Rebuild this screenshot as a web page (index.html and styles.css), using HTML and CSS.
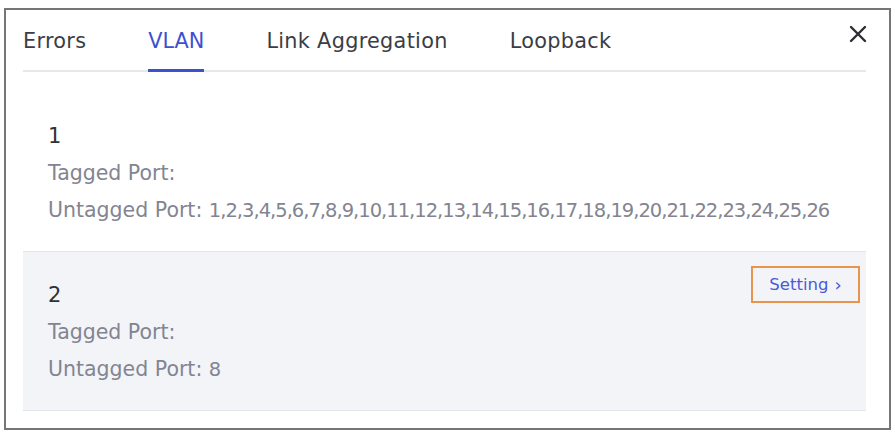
FILE: index.html
```html
<!DOCTYPE html>
<html lang="en">
<head>
<meta charset="utf-8">
<title>VLAN</title>
<link rel="stylesheet" href="styles.css">
</head>
<body>
<div class="frame">
  <div class="header">
    <nav class="tabs">
      <span class="tab">Errors</span>
      <span class="tab active">VLAN</span>
      <span class="tab">Link Aggregation</span>
      <span class="tab">Loopback</span>
    </nav>
    <button class="close" aria-label="Close">
      <svg width="18" height="18" viewBox="0 0 18 18"><path d="M2 2 L16 16 M16 2 L2 16" stroke="#2b2d33" stroke-width="2.4" stroke-linecap="round" fill="none"/></svg>
    </button>
  </div>
  <div class="list">
    <div class="vlan">
      <div class="info">
        <div class="vid">1</div>
        <div class="label">Tagged Port:</div>
        <div class="label">Untagged Port: <span class="ports">1,2,3,4,5,6,7,8,9,10,11,12,13,14,15,16,17,18,19,20,21,22,23,24,25,26</span></div>
      </div>
    </div>
    <div class="vlan hover">
      <div class="info">
        <div class="vid">2</div>
        <div class="label">Tagged Port:</div>
        <div class="label">Untagged Port: <span class="ports">8</span></div>
      </div>
      <a class="setting">Setting <span class="chev">&#8250;</span></a>
    </div>
  </div>
</div>
</body>
</html>
```
FILE: styles.css
```css
html, body {
  margin: 0;
  padding: 0;
  background: #ffffff;
}
body {
  font-family: "DejaVu Sans", "Noto Sans", sans-serif;
}
.frame {
  margin: 8px 4px 0 4px;
  height: 418px;
  border: 2px solid #767676;
  background: #fff;
  padding: 0 23px 0 17px;
  position: relative;
}
.header {
  display: flex;
  align-items: flex-start;
}
.tabs {
  flex: 1;
  display: flex;
  gap: 62px;
  border-bottom: 2px solid #e7e8ec;
  padding-top: 19px;
}
.tab {
  font-size: 20.8px;
  line-height: 24px;
  letter-spacing: 0.3px;
  color: #3a3d45;
  padding-bottom: 16px;
  margin-bottom: -2px;
  border-bottom: 3px solid transparent;
}
.tab.active {
  letter-spacing: 0;
  color: #3d50cf;
  border-bottom-color: #3d50cf;
}
.close {
  position: absolute;
  right: 22px;
  top: 15px;
  border: 0;
  background: transparent;
  padding: 0;
  width: 18px;
  height: 18px;
}
.list {
  display: flex;
  flex-direction: column;
}
.vlan {
  display: flex;
  justify-content: space-between;
  align-items: flex-start;
  padding: 46px 6px 22px 25px;
}
.vlan.hover {
  background: #f3f4f8;
  border-top: 1px solid #e3e5ea;
  border-bottom: 1px solid #e3e5ea;
  padding: 14px 6px 22px 25px;
}
.vlan.hover .info {
  margin-top: 11px;
}
.vid {
  font-size: 21px;
  line-height: 37px;
  color: #2f3138;
}
.label {
  font-size: 20.5px;
  line-height: 37px;
  color: #828591;
  white-space: nowrap;
}
.ports {
  font-size: 19.5px;
  letter-spacing: -1px;
}
.setting {
  display: flex;
  align-items: center;
  justify-content: center;
  gap: 6px;
  width: 105px;
  height: 33px;
  border: 2px solid #e8944c;
  color: #4a5bd6;
  font-size: 16.5px;
}
.chev {
  font-size: 18px;
  line-height: 1;
}
```
